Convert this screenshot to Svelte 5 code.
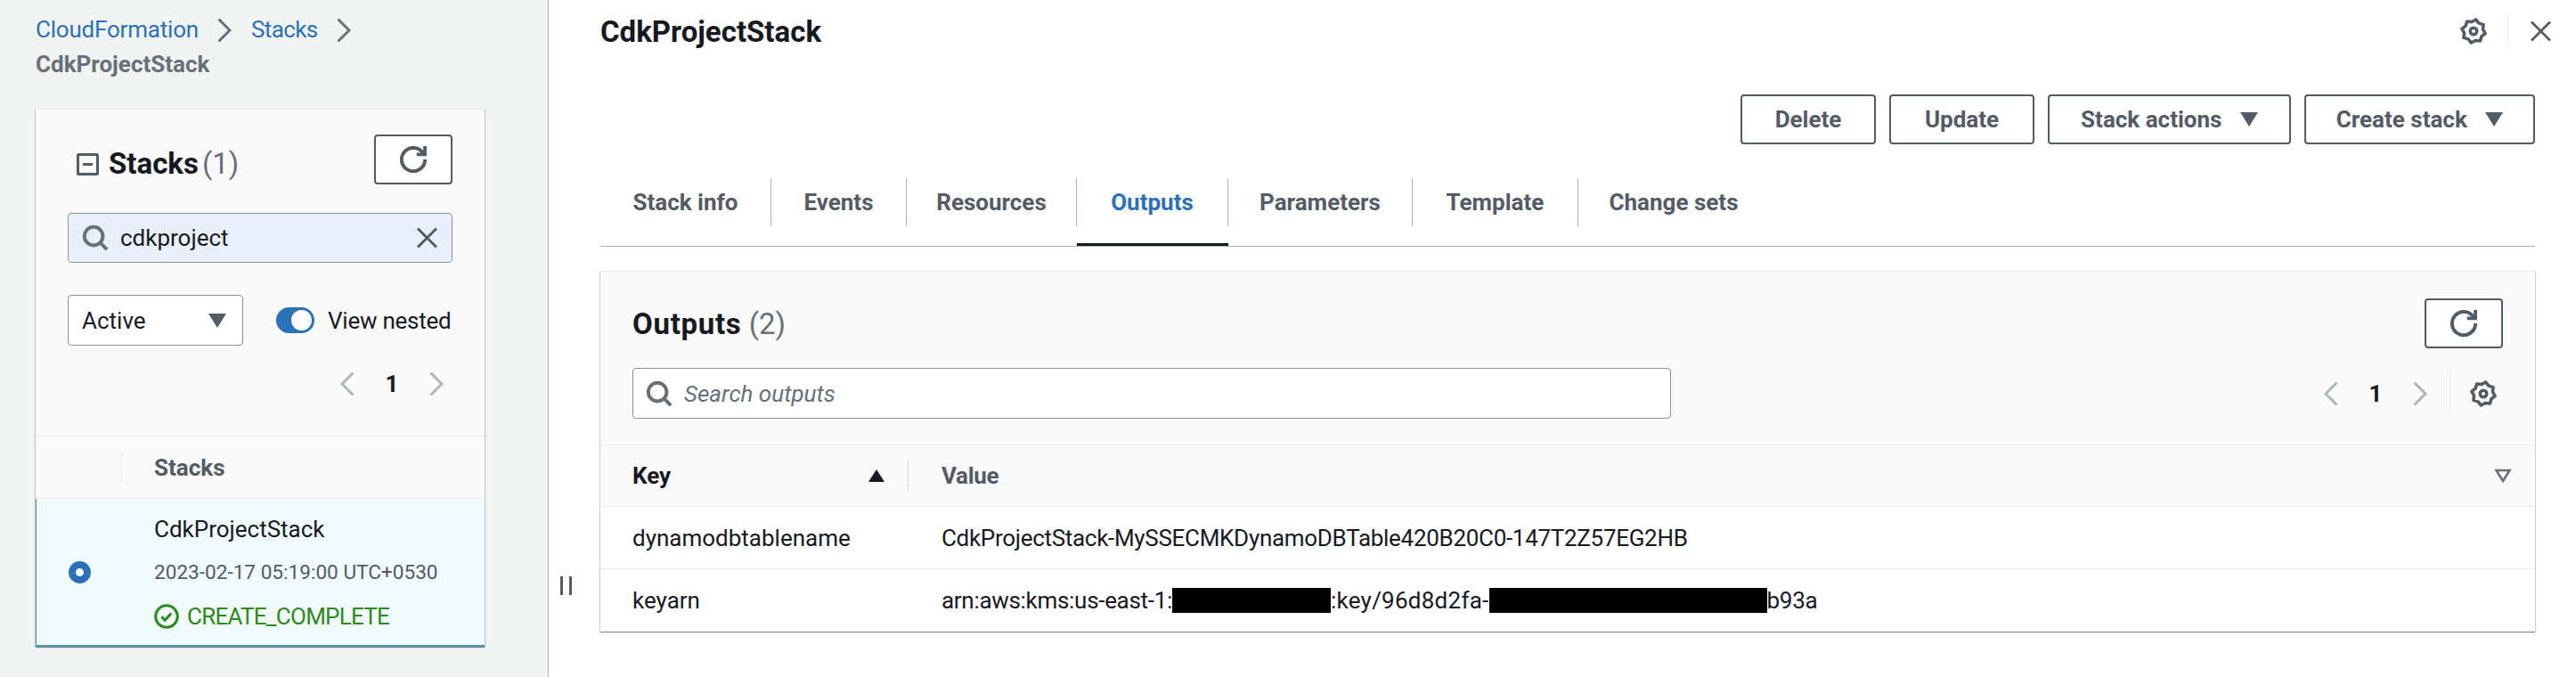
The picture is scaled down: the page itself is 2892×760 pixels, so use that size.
<script>
	const tabs = [
		{ name: "Stack info", width: 192 },
		{ name: "Events", width: 152 },
		{ name: "Resources", width: 191 },
		{ name: "Outputs", width: 170 },
		{ name: "Parameters", width: 207 },
		{ name: "Template", width: 186 },
		{ name: "Change sets", width: 214 }
	];
	const activeTab = "Outputs";

	// cog outline, eight teeth on a 16 unit box
	function gearPath() {
		const pts = [];
		for (let i = 0; i < 16; i++) {
			const a = (i * Math.PI) / 8 + Math.PI / 16;
			const r = i % 2 ? 5.7 : 7.1;
			pts.push(`${(8 + r * Math.cos(a)).toFixed(2)} ${(8 + r * Math.sin(a)).toFixed(2)}`);
		}
		return "M" + pts.join("L") + "Z";
	}
	const gear = gearPath();
</script>

{#snippet refresh()}
	<svg class="icon" viewBox="0 0 16 16"><path d="M10 5h5V0" /><path d="M15 8a7 7 0 1 1-.6-2.8" /></svg>
{/snippet}

{#snippet search()}
	<svg class="icon icon-search" viewBox="0 0 16 16"><circle cx="7" cy="7" r="5.5" /><path d="M15 15l-4.1-4.1" /></svg>
{/snippet}

{#snippet chevronLeft(cls)}
	<svg class="chev {cls}" viewBox="0 0 16 28"><path d="M14.5 1.5L2 14l12.5 12.5" /></svg>
{/snippet}

{#snippet chevronRight(cls)}
	<svg class="chev {cls}" viewBox="0 0 16 28"><path d="M1.5 1.5L14 14 1.5 26.5" /></svg>
{/snippet}

{#snippet gearIcon()}
	<svg class="gear" viewBox="0 0 16 16"><path d={gear} /><circle cx="8" cy="8" r="2" /></svg>
{/snippet}

<div class="page">
	<aside class="side">
		<nav class="crumbs">
			<div class="crumbs-line">
				<span class="link">CloudFormation</span>
				{@render chevronRight("chev-crumb")}
				<span class="link link-short">Stacks</span>
				{@render chevronRight("chev-crumb")}
			</div>
			<div class="crumbs-current">CdkProjectStack</div>
		</nav>

		<section class="card">
			<div class="card-top">
				<div class="card-head">
					<h2 class="card-title">
						<svg class="collapse" viewBox="0 0 25 25"><rect x="1.5" y="1.5" width="22" height="22" rx="1" /><path d="M7 12.5h11" /></svg>
						Stacks <span class="count count-side">(1)</span>
					</h2>
					<button class="btn btn-icon">{@render refresh()}</button>
				</div>
				<div class="filter">
					<span class="filter-search">{@render search()}</span>
					<span class="filter-text">cdkproject</span>
					<svg class="filter-clear" viewBox="0 0 16 16"><path d="M1 1l14 14M15 1L1 15" /></svg>
				</div>
				<div class="status-row">
					<div class="select">
						<span>Active</span>
						<span class="caret"></span>
					</div>
					<div class="toggle"><span class="toggle-knob"></span></div>
					<span class="toggle-label">View nested</span>
				</div>
				<div class="pager pager-side">
					{@render chevronLeft("chev-off")}
					<span class="pager-num">1</span>
					{@render chevronRight("chev-off")}
				</div>
			</div>
			<div class="list-head">
				<div class="list-spacer"></div>
				<div class="list-title">Stacks</div>
			</div>
			<div class="list-row">
				<div class="list-radio"><span class="radio"></span></div>
				<div class="list-info">
					<div class="list-line">CdkProjectStack</div>
					<div class="list-line list-date">2023-02-17 05:19:00 UTC+0530</div>
					<div class="list-line list-status">
						<svg class="ok" viewBox="0 0 16 16"><circle cx="8" cy="8" r="7" /><path d="M4.8 8.2l2.2 2.2 4-4.4" /></svg>
						CREATE_COMPLETE
					</div>
				</div>
			</div>
		</section>
	</aside>

	<div class="grip"><span></span><span></span></div>

	<main class="main">
		<header class="head">
			<h1 class="head-title">CdkProjectStack</h1>
			<div class="head-tools">
				{@render gearIcon()}
				<span class="head-sep"></span>
				<svg class="head-close" viewBox="0 0 16 16"><path d="M1 1l14 14M15 1L1 15" /></svg>
			</div>
		</header>

		<div class="actions">
			<button class="btn btn-delete">Delete</button>
			<button class="btn btn-update">Update</button>
			<button class="btn btn-stack">Stack actions <span class="caret caret-btn"></span></button>
			<button class="btn btn-create">Create stack <span class="caret caret-btn"></span></button>
		</div>

		<ul class="tabs">
			{#each tabs as tab, i}
				<li class="tab" class:tab-active={tab.name === activeTab} style="width: {tab.width}px">
					<span class="tab-label" class:tab-last={i === tabs.length - 1}>{tab.name}</span>
				</li>
			{/each}
		</ul>

		<section class="panel">
			<div class="panel-top">
				<div class="panel-head">
					<h2 class="panel-title"><span class="panel-name">Outputs</span> <span class="count">(2)</span></h2>
					<button class="btn btn-icon">{@render refresh()}</button>
				</div>
				<div class="panel-tools">
					<div class="find">
						{@render search()}
						<span class="find-text">Search outputs</span>
					</div>
					<div class="pager pager-panel">
						{@render chevronLeft("chev-off")}
						<span class="pager-num">1</span>
						{@render chevronRight("chev-off")}
						<span class="pager-sep"></span>
						{@render gearIcon()}
					</div>
				</div>
			</div>

			<div class="row row-head">
				<div class="cell-key key-head">
					<span>Key</span>
					<span class="sort-up"></span>
				</div>
				<div class="cell-value value-head">
					<span>Value</span>
					<svg class="sort-off" viewBox="0 0 20 16"><path d="M2.5 2h15L10 14z" /></svg>
				</div>
			</div>
			<div class="row">
				<div class="cell-key">dynamodbtablename</div>
				<div class="cell-value">CdkProjectStack-MySSECMKDynamoDBTable420B20C0-147T2Z57EG2HB</div>
			</div>
			<div class="row">
				<div class="cell-key">keyarn</div>
				<div class="cell-value">arn:aws:kms:us-east-1:<span class="mask mask-a"></span><span class="key-part">:key/96d8d2fa-</span><span class="mask mask-b"></span>b93a</div>
			</div>
		</section>
	</main>
</div>

<style>
	:global(body) {
		margin: 0;
		background: #fff;
	}

	.page {
		display: flex;
		width: 2892px;
		height: 760px;
		overflow: hidden;
		font-family: Roboto, "Liberation Sans", sans-serif;
		font-size: 26px;
		color: #16191f;
	}

	h1,
	h2,
	ul {
		margin: 0;
		padding: 0;
	}

	.btn {
		display: inline-flex;
		align-items: center;
		justify-content: center;
		height: 56px;
		box-sizing: border-box;
		padding: 0;
		background: #fff;
		border: 2px solid #545b64;
		border-radius: 4px;
		font: 700 26px Roboto, sans-serif;
		color: #545b64;
		white-space: pre;
	}

	.btn-icon {
		width: 88px;
	}

	.btn-delete {
		width: 152px;
	}

	.btn-update {
		width: 163px;
	}

	.btn-stack {
		width: 273px;
	}

	.btn-create {
		width: 259px;
	}

	.icon {
		width: 30px;
		height: 30px;
		fill: none;
		stroke: #545b64;
		stroke-width: 2.1;
	}

	.icon-search {
		stroke: #687078;
	}

	.gear {
		width: 30px;
		height: 30px;
		fill: none;
		stroke: #545b64;
		stroke-width: 1.9;
		stroke-linejoin: round;
	}

	.chev {
		flex: none;
		width: 16px;
		height: 28px;
		fill: none;
		stroke: #687078;
		stroke-width: 3;
	}

	.chev-off {
		stroke: #aab7b8;
	}

	.caret {
		display: inline-block;
		width: 0;
		height: 0;
		border-left: 10px solid transparent;
		border-right: 10px solid transparent;
		border-top: 16px solid #545b64;
	}

	.caret-btn {
		margin-left: 14px;
	}

	.count {
		font-weight: 400;
		color: #687078;
	}

	.count-side {
		margin-left: -5px;
	}

	/* left column */
	.side {
		flex: 0 0 616px;
		box-sizing: border-box;
		padding: 14px 71px 0 40px;
		background: #f2f3f3;
		border-right: 1px solid #aab7b8;
	}

	.crumbs {
		height: 78px;
		line-height: 39px;
	}

	.crumbs-line {
		display: flex;
		align-items: center;
		letter-spacing: -0.2px;
	}

	.crumbs-line :global(.chev-crumb) {
		margin: 0 21px;
	}

	.link {
		color: #2b71b8;
	}

	.link-short {
		margin-left: 1px;
		letter-spacing: -0.6px;
	}

	.crumbs-current {
		font-weight: 700;
		color: #687078;
	}

	.card {
		margin-top: 30px;
		height: 604px;
		background: #fafafa;
		border-top: 1px solid #eaeded;
		box-sizing: border-box;
		box-shadow: 0 1px 1px 0 rgba(0, 28, 36, 0.3), 1px 1px 1px 0 rgba(0, 28, 36, 0.15), -1px 1px 1px 0 rgba(0, 28, 36, 0.15);
	}

	.card-top {
		height: 367px;
		box-sizing: border-box;
		padding: 28px 36px 0;
		border-bottom: 1px solid #eaeded;
	}

	.card-head {
		display: flex;
		align-items: center;
		justify-content: space-between;
	}

	.card-title {
		display: flex;
		align-items: center;
		gap: 9px;
		margin-top: 10px;
		margin-left: 10px;
		font-size: 33px;
		line-height: 40px;
	}

	.collapse {
		width: 25px;
		height: 25px;
		fill: none;
		stroke: #545b64;
		stroke-width: 3;
		margin-right: 2px;
	}

	.filter {
		display: flex;
		align-items: center;
		height: 56px;
		box-sizing: border-box;
		margin-top: 32px;
		padding: 0 15px;
		background: #e9f0fb;
		border: 1px solid #879596;
		border-radius: 4px;
	}

	.filter-search {
		display: flex;
	}

	.filter-text {
		margin-left: 13px;
		flex: 1;
	}

	.filter-clear {
		width: 25px;
		height: 24px;
		fill: none;
		stroke: #545b64;
		stroke-width: 2;
	}

	.status-row {
		display: flex;
		align-items: center;
		margin-top: 36px;
	}

	.select {
		display: flex;
		align-items: center;
		justify-content: space-between;
		width: 197px;
		height: 57px;
		box-sizing: border-box;
		padding: 0 18px 0 15px;
		background: #fff;
		border: 1px solid #879596;
		border-radius: 4px;
	}

	.toggle {
		display: flex;
		flex: none;
		justify-content: flex-end;
		align-items: center;
		width: 43px;
		height: 29px;
		box-sizing: border-box;
		margin-left: 37px;
		padding-right: 3px;
		background: #2b71b8;
		border-radius: 15px;
	}

	.toggle-knob {
		width: 23px;
		height: 23px;
		background: #fff;
		border-radius: 50%;
	}

	.toggle-label {
		margin-left: 15px;
		white-space: nowrap;
		letter-spacing: -0.25px;
	}

	.pager {
		display: flex;
		align-items: center;
	}

	.pager-side {
		justify-content: flex-end;
		margin-top: 28px;
		margin-right: 10px;
		height: 30px;
	}

	.pager-panel {
		margin-right: 7px;
	}

	.pager-num {
		width: 84px;
		text-align: center;
		font-weight: 700;
	}

	.list-head {
		display: flex;
		align-items: center;
		height: 70px;
		box-sizing: border-box;
		border-bottom: 1px solid #eaeded;
	}

	.list-spacer {
		width: 96px;
		height: 34px;
		border-right: 1px solid #eaeded;
	}

	.list-title {
		margin-left: 36px;
		font-weight: 700;
		color: #545b64;
	}

	.list-row {
		display: flex;
		height: 166px;
		box-sizing: border-box;
		background: #f1faff;
		border-left: 1px solid #4f94bb;
		border-bottom: 2px solid #4f94bb;
	}

	.list-radio {
		display: flex;
		align-items: center;
		justify-content: center;
		width: 96px;
	}

	.radio {
		width: 25px;
		height: 25px;
		box-sizing: border-box;
		background: #fff;
		border: 8px solid #2b71b8;
		border-radius: 50%;
	}

	.list-info {
		padding: 10px 0 0 36px;
	}

	.list-line {
		height: 48px;
		line-height: 48px;
		white-space: nowrap;
	}

	.list-date {
		height: 50px;
		line-height: 50px;
		font-size: 22.6px;
		color: #545b64;
	}

	.list-status {
		display: flex;
		align-items: center;
		gap: 9px;
		letter-spacing: -0.75px;
		color: #2f8a1c;
	}

	.ok {
		width: 28px;
		height: 28px;
		fill: none;
		stroke: #2f8a1c;
		stroke-width: 1.8;
	}

	.grip {
		display: flex;
		align-items: flex-start;
		gap: 7px;
		flex: none;
		width: 13px;
		margin: 0 -26px 0 13px;
		padding-top: 647px;
	}

	.grip span {
		flex: none;
		width: 3px;
		height: 21px;
		background: #545b64;
	}

	/* right column */
	.main {
		flex: 1;
		box-sizing: border-box;
		padding: 0 46px 0 58px;
	}

	.head {
		display: flex;
		align-items: center;
		justify-content: space-between;
		height: 70px;
		margin-right: -19px;
	}

	.head-title {
		font-size: 33px;
		font-weight: 700;
	}

	.head-tools {
		display: flex;
		align-items: center;
	}

	.head-sep {
		width: 1px;
		height: 40px;
		margin: 0 24px 0 23px;
		background: #eaeded;
	}

	.head-close {
		width: 25px;
		height: 24px;
		fill: none;
		stroke: #545b64;
		stroke-width: 1.8;
	}

	.actions {
		display: flex;
		justify-content: flex-end;
		gap: 15px;
		margin-top: 36px;
	}

	.tabs {
		display: flex;
		margin-top: 38px;
		list-style: none;
		border-bottom: 1px solid #aab7b8;
	}

	.tab {
		box-sizing: border-box;
		padding-bottom: 19px;
		border-bottom: 3px solid transparent;
	}

	.tab-active {
		border-bottom-color: #16191f;
	}

	.tab-label {
		display: flex;
		align-items: center;
		justify-content: center;
		height: 54px;
		border-right: 1px solid #aab7b8;
		font-weight: 700;
		color: #545b64;
	}

	.tab-active .tab-label {
		color: #2b71b8;
	}

	.tab-last {
		border-right: 0;
	}

	.panel {
		margin-top: 27px;
		background: #fff;
		border-top: 1px solid #eaeded;
		box-shadow: 0 1px 1px 0 rgba(0, 28, 36, 0.3), 1px 1px 1px 0 rgba(0, 28, 36, 0.15), -1px 1px 1px 0 rgba(0, 28, 36, 0.15);
	}

	.panel-top {
		height: 195px;
		box-sizing: border-box;
		padding: 30px 36px 0;
		background: #fafafa;
		border-bottom: 1px solid #eaeded;
	}

	.panel-head {
		display: flex;
		align-items: center;
		justify-content: space-between;
	}

	.panel-title {
		font-size: 33px;
	}

	.panel-name {
		letter-spacing: 0.7px;
	}

	.panel-tools {
		display: flex;
		align-items: center;
		justify-content: space-between;
		margin-top: 22px;
	}

	.find {
		display: flex;
		align-items: center;
		width: 1166px;
		height: 57px;
		box-sizing: border-box;
		padding: 0 14px;
		background: #fff;
		border: 1px solid #879596;
		border-radius: 4px;
	}

	.find-text {
		margin-left: 13px;
		font-style: italic;
		color: #687078;
	}

	.pager-sep {
		width: 1px;
		height: 56px;
		margin: 0 22px 0 25px;
		background: #eaeded;
	}

	.row {
		display: flex;
		align-items: center;
		height: 70px;
		box-sizing: border-box;
		border-bottom: 1px solid #eaeded;
	}

	.row:last-child {
		border-bottom: 0;
	}

	.row-head {
		height: 69px;
		background: #fafafa;
		font-weight: 700;
	}

	.cell-key {
		box-sizing: border-box;
		width: 346px;
		padding-left: 36px;
	}

	.cell-value {
		flex: 1;
		display: flex;
		align-items: center;
		padding-left: 37px;
		white-space: pre;
		letter-spacing: -0.3px;
	}

	.key-part {
		letter-spacing: 0.25px;
	}

	.key-head {
		display: flex;
		align-items: center;
		justify-content: space-between;
		height: 34px;
		padding-right: 26px;
		border-right: 1px solid #d5dbdb;
	}

	.sort-up {
		width: 0;
		height: 0;
		border-left: 9px solid transparent;
		border-right: 9px solid transparent;
		border-bottom: 14px solid #16191f;
	}

	.value-head {
		justify-content: space-between;
		padding-right: 26px;
		color: #545b64;
	}

	.sort-off {
		width: 20px;
		height: 16px;
		fill: none;
		stroke: #687078;
		stroke-width: 2.6;
	}

	.mask {
		display: inline-block;
		height: 28px;
		background: #000;
	}

	.mask-a {
		width: 178px;
	}

	.mask-b {
		width: 312px;
	}
</style>
